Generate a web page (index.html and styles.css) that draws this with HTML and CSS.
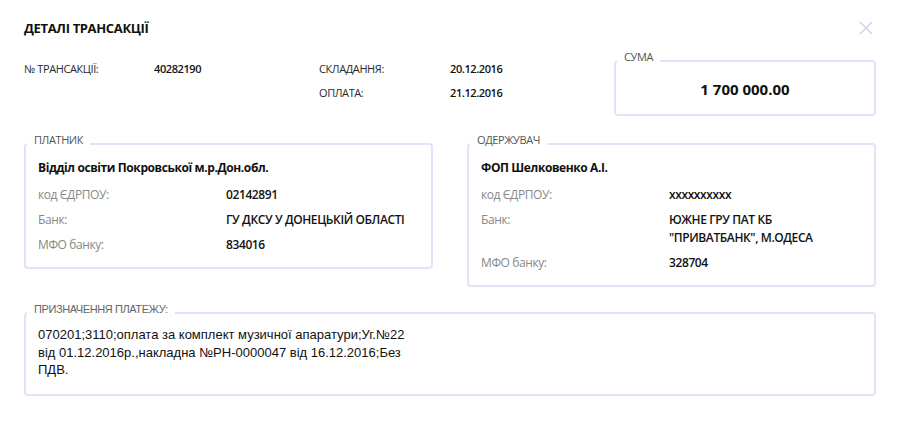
FILE: index.html
```html
<!DOCTYPE html>
<html lang="uk">
<head>
    <meta charset="UTF-8">
    <title>Деталі трансакції</title>
    <link rel="stylesheet" href="styles.css">
</head>
<body>
    <div class="modal">
        <div class="modal-header">
            <h1>ДЕТАЛІ ТРАНСАКЦІЇ</h1>
            <button class="close-btn" aria-label="Закрити">
                <svg width="14" height="14" viewBox="0 0 14 14">
                    <path d="M1 1 L13 13 M13 1 L1 13" stroke="#c9d1e6" stroke-width="1.4" fill="none"/>
                </svg>
            </button>
        </div>

        <div class="summary">
            <div class="summary-info">
                <span class="info-label">№ ТРАНСАКЦІЇ:</span>
                <span class="info-value">40282190</span>
                <span class="info-label">СКЛАДАННЯ:</span>
                <span class="info-value">20.12.2016</span>
                <span></span>
                <span></span>
                <span class="info-label">ОПЛАТА:</span>
                <span class="info-value">21.12.2016</span>
            </div>

            <fieldset class="box sum-box">
                <legend>СУМА</legend>
                <div class="sum-value">1 700 000.00</div>
            </fieldset>
        </div>

        <div class="parties">
            <fieldset class="box party">
                <legend>ПЛАТНИК</legend>
                <div class="party-name">Відділ освіти Покровської м.р.Дон.обл.</div>
                <div class="party-row">
                    <span class="party-label">код ЄДРПОУ:</span>
                    <span class="party-value">02142891</span>
                </div>
                <div class="party-row">
                    <span class="party-label">Банк:</span>
                    <span class="party-value">ГУ ДКСУ У ДОНЕЦЬКІЙ ОБЛАСТІ</span>
                </div>
                <div class="party-row">
                    <span class="party-label">МФО банку:</span>
                    <span class="party-value">834016</span>
                </div>
            </fieldset>

            <fieldset class="box party">
                <legend>ОДЕРЖУВАЧ</legend>
                <div class="party-name">ФОП Шелковенко А.І.</div>
                <div class="party-row">
                    <span class="party-label">код ЄДРПОУ:</span>
                    <span class="party-value">xxxxxxxxxx</span>
                </div>
                <div class="party-row">
                    <span class="party-label">Банк:</span>
                    <span class="party-value">ЮЖНЕ ГРУ ПАТ КБ<br>"ПРИВАТБАНК", М.ОДЕСА</span>
                </div>
                <div class="party-row">
                    <span class="party-label">МФО банку:</span>
                    <span class="party-value">328704</span>
                </div>
            </fieldset>
        </div>

        <fieldset class="box purpose">
            <legend>ПРИЗНАЧЕННЯ ПЛАТЕЖУ:</legend>
            <p>070201;3110;оплата за комплект музичної апаратури;Уг.№22<br>від 01.12.2016р.,накладна №РН-0000047 від 16.12.2016;Без<br>ПДВ.</p>
        </fieldset>
    </div>
</body>
</html>
```

FILE: styles.css
```css
* {
    margin: 0;
    padding: 0;
    box-sizing: border-box;
}

body {
    font-family: "Open Sans", "Noto Sans", sans-serif;
    background: #fff;
    color: #111;
}

.modal {
    width: 900px;
    padding: 18px 24px 0;
}

.modal-header {
    display: flex;
    justify-content: space-between;
    align-items: center;
    height: 20px;
}

.modal-header h1 {
    font-size: 13px;
    font-weight: 700;
    line-height: 20px;
    letter-spacing: -0.35px;
    color: #111;
}

.close-btn {
    border: none;
    background: none;
    width: 14px;
    height: 14px;
    margin-right: 3px;
    cursor: pointer;
}

.close-btn svg {
    display: block;
}

/* top part: ids, dates and the amount */
.summary {
    display: flex;
    align-items: flex-start;
    margin-top: 19px;
}

.summary-info {
    display: grid;
    grid-template-columns: 130px 165px 131px 120px;
    line-height: 24px;
    font-size: 11px;
    letter-spacing: -0.4px;
}

.info-label {
    color: #2a2a2a;
}

.info-value {
    font-weight: 600;
    color: #111;
}

.box {
    border: 2px solid #dfe5f6;
    border-radius: 4px;
    padding: 0 12px;
    min-width: 0;
}

.box legend {
    margin-left: -11px;
    padding: 0 7px 8px;
    font-size: 11px;
    line-height: 14px;
    letter-spacing: -0.4px;
    color: #555;
}

.sum-box {
    margin-left: auto;
    width: 262px;
    height: 66px;
    margin-top: -7px;
}

.sum-value {
    text-align: center;
    font-size: 15px;
    font-weight: 700;
    line-height: 20px;
    margin-top: 7px;
}

/* payer / receiver cards */
.parties {
    display: flex;
    align-items: flex-start;
    justify-content: space-between;
    margin-top: 17px;
}

.party {
    width: 409px;
    padding-bottom: 10px;
}

.party-name {
    font-size: 12px;
    font-weight: 700;
    line-height: 25px;
    letter-spacing: -0.4px;
    margin-bottom: 2px;
}

.party-row {
    display: grid;
    grid-template-columns: 188px 1fr;
    font-size: 12px;
    line-height: 18px;
    letter-spacing: -0.4px;
    padding: 3.5px 0;
}

.party-label {
    color: #888;
}

.party-value {
    font-weight: 600;
    color: #111;
}

/* payment purpose */
.purpose {
    margin-top: 15px;
    padding: 2px 12px 15px;
}

.purpose legend {
    font-family: "Liberation Sans", Arial, sans-serif;
    color: #666;
}

.purpose p {
    font-family: "Liberation Sans", Arial, sans-serif;
    font-size: 13px;
    line-height: 17.5px;
    color: #111;
}
```
